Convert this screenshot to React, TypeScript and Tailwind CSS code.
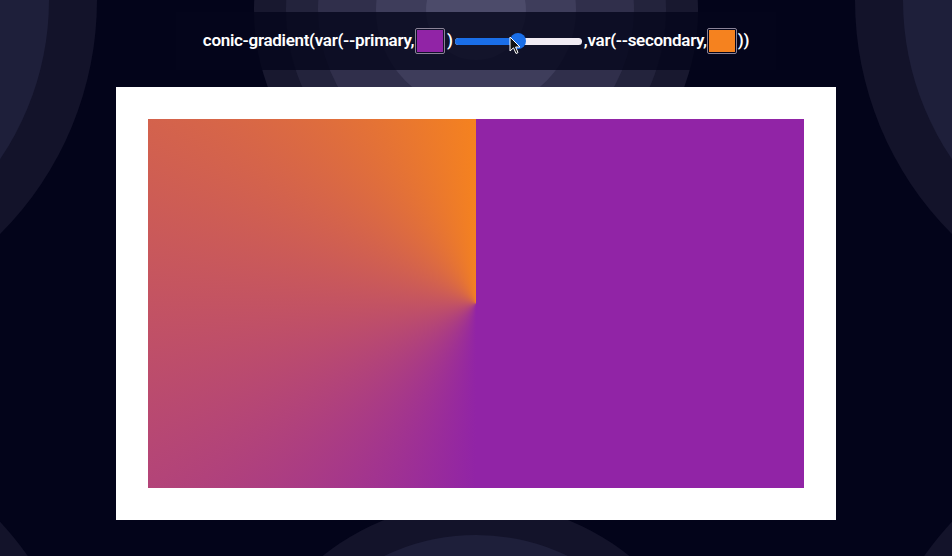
import React from "react";

const PRIMARY = "#9124a6";
const SECONDARY = "#f5821f";

function Backdrop() {
    return (
        <svg className="absolute inset-0" width="952" height="556" viewBox="0 0 952 556">
            <circle cx="-234" cy="0" r="331" fill="#13132a" />
            <circle cx="-234" cy="0" r="283" fill="#1e1f3a" />
            <circle cx="1186" cy="0" r="331" fill="#13132a" />
            <circle cx="1186" cy="0" r="283" fill="#1e1f3a" />
            <circle cx="-234" cy="740" r="320" fill="#13132a" />
            <circle cx="1186" cy="740" r="320" fill="#13132a" />
            <circle cx="476" cy="747" r="245" fill="#13132a" />
            <circle cx="476" cy="747" r="212" fill="#1e1f3a" />
            <circle cx="476" cy="10" r="222" fill="#18182f" />
            <circle cx="476" cy="10" r="190" fill="#23233c" />
            <circle cx="476" cy="10" r="158" fill="#302f4b" />
            <circle cx="476" cy="10" r="100" fill="#3e3d5b" />
            <circle cx="476" cy="10" r="50" fill="#4c4b6a" />
        </svg>
    );
}

function Swatch(props: { color: string }) {
    return (
        <div className="w-[30px] h-[26px] border border-[#8b8397] rounded-[2px] p-px">
            <div className="w-full h-full" style={{ backgroundColor: props.color }}></div>
        </div>
    );
}

function Slider() {
    return (
        <div className="relative w-[127px] h-[16px] flex items-center mx-[2px]">
            <div className="w-full h-[7px] rounded-full bg-[#f1ecf4] overflow-hidden flex">
                <div className="w-[63px] h-full bg-[#1a6ee8]"></div>
            </div>
            <div className="absolute left-[55px] top-0 w-[16px] h-[16px] rounded-full bg-[#1a6ee8]"></div>
            <svg className="absolute left-[54px] top-[3px]" width="12" height="19" viewBox="0 0 12 19">
                <path d="M1 1 L1 15 L4.5 11.8 L7 17.5 L9 16.6 L6.6 11 L11 11 Z" fill="#111" stroke="#fff" strokeWidth="1" strokeLinejoin="round" />
            </svg>
        </div>
    );
}

export default function App() {
    return (
        <div className="relative w-[952px] h-[556px] overflow-hidden bg-[#03041a] font-['Roboto',sans-serif]">
            <Backdrop />
            <div className="relative flex flex-col items-center pt-[12px]">
                <div className="w-[600px] h-[58px] bg-[#05061c]/80 flex items-center justify-center text-white text-[17px] font-semibold tracking-[-0.3px]">
                    <span className="mr-px">conic-gradient(var(--primary,</span>
                    <Swatch color={PRIMARY} />
                    <span className="ml-[2px]">)</span>
                    <Slider />
                    <span>,var(--secondary,</span>
                    <Swatch color={SECONDARY} />
                    <span className="ml-px">))</span>
                </div>
                <div className="mt-[17px] w-[720px] h-[433px] bg-white p-8">
                    <div className="w-full h-full [background:conic-gradient(#9124a6_50%,#f5821f)]"></div>
                </div>
            </div>
        </div>
    );
}
